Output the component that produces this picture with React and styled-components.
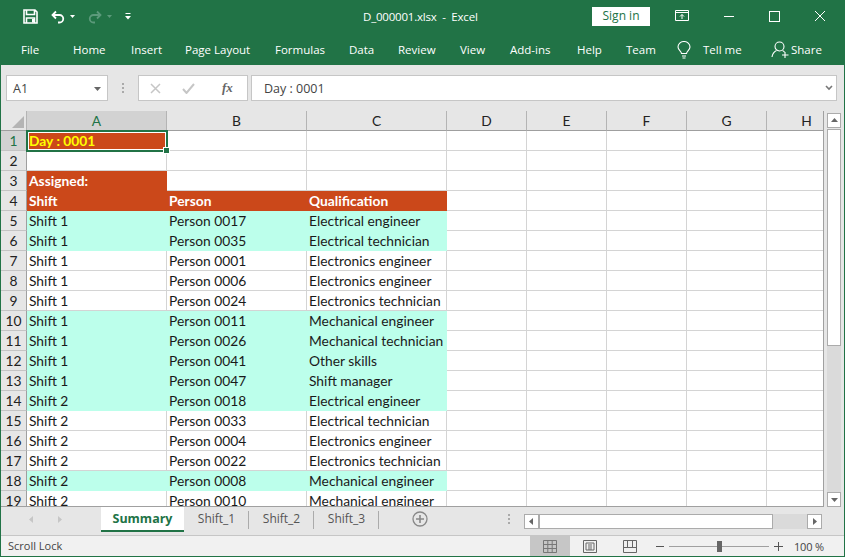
import React from "react"
import styled, { createGlobalStyle } from "styled-components"

const GREEN = "#217346"
const ORANGE = "#cb481a"
const TEAL = "#bcffeb"

const Global = createGlobalStyle`
  html, body {
    margin: 0;
    padding: 0;
    background: #e6e6e6;
  }
  * {
    box-sizing: border-box;
  }
`

const Window = styled.div`
  width: 845px;
  height: 557px;
  display: flex;
  flex-direction: column;
  border: 1px solid ${GREEN};
  border-top: 0;
  overflow: hidden;
  font-family: "Open Sans", "Noto Sans", sans-serif;
  background: #e6e6e6;
`

const TitleBar = styled.div`
  height: 32px;
  flex: none;
  display: flex;
  align-items: center;
  background: ${GREEN};
  color: #fff;
  font-size: 11.5px;
`

const Qat = styled.div`
  width: 362px;
  flex: none;
  display: flex;
  align-items: center;
  padding: 1px 0 0 22px;
`

const QatIcon = styled.svg`
  display: block;
  flex: none;
  margin-right: ${props => props.$gap || 0}px;
`

const Title = styled.div`
  width: 229px;
  flex: none;
  white-space: pre;
  letter-spacing: -0.2px;
`

const SignIn = styled.div`
  width: 58px;
  height: 19px;
  margin-right: 25px;
  flex: none;
  background: #fff;
  color: ${GREEN};
  text-align: center;
  line-height: 18px;
  font-size: 12px;
`

const WinButton = styled.svg`
  display: block;
  flex: none;
  margin-right: ${props => props.$gap || 0}px;
`

const Ribbon = styled.div`
  height: 33px;
  flex: none;
  display: flex;
  align-items: center;
  padding: 2px 0 0 20px;
  background: ${GREEN};
  color: #fff;
  font-size: 11.5px;
`

const RibbonTab = styled.div`
  width: ${props => props.$w}px;
  flex: none;
  display: flex;
  align-items: center;
  white-space: nowrap;
`

const Share = styled.div`
  display: flex;
  align-items: center;
  gap: 1px;
`

const FormulaBar = styled.div`
  height: 46px;
  flex: none;
  display: flex;
  align-items: flex-start;
  padding: 10px 7px 0 5px;
  background: #e6e6e6;
  color: #444;
  font-size: 12.5px;
`

const Box = styled.div`
  height: 26px;
  background: #fff;
  border: 1px solid #c6c6c6;
  display: flex;
  align-items: center;
`

const NameBox = styled(Box)`
  width: 102px;
  flex: none;
  padding: 0 6px;
  justify-content: space-between;
`

const Dots = styled.div`
  width: 30px;
  flex: none;
  height: 26px;
  display: flex;
  align-items: center;
  justify-content: center;
`

const FxBox = styled(Box)`
  width: 110px;
  flex: none;
  margin-right: 3px;
  position: relative;
  padding-left: 11px;
  gap: 21px;
`

const FxLabel = styled.span`
  font-family: "Liberation Serif", serif;
  font-style: italic;
  font-weight: 700;
  font-size: 13px;
  color: #666;
  margin-left: 6px;
`

const FormulaInput = styled(Box)`
  flex: 1;
  padding: 0 3px 0 12px;
  justify-content: space-between;
`

const SheetArea = styled.div`
  height: 396px;
  flex: none;
  display: flex;
`

const Sheet = styled.div`
  width: 823px;
  flex: none;
  overflow: hidden;
  border-right: 1px solid #a0a0a0;
  border-bottom: 1px solid #a0a0a0;
`

const Grid = styled.div`
  width: 846px;
  display: grid;
  grid-template-columns: 26px repeat(3, 140px) repeat(5, 80px);
  grid-auto-rows: 20px;
  font-family: Lato, "Open Sans", sans-serif;
`

const ColHead = styled.div`
  display: flex;
  align-items: center;
  justify-content: center;
  font-size: 13.8px;
  background: ${props => (props.$active ? "#d2d2d2" : "#e6e6e6")};
  color: ${props => (props.$active ? GREEN : "#222")};
  border-right: 1px solid #b4b4b4;
  border-bottom: 1px solid #9f9f9f;
`

const Corner = styled(ColHead)`
  justify-content: flex-end;
  align-items: flex-end;
  padding: 0 2px 2px 0;
  border-right: 1px solid #b4b4b4;
`

const RowHead = styled.div`
  display: flex;
  align-items: center;
  justify-content: center;
  font-size: 13.8px;
  background: ${props => (props.$active ? "#d2d2d2" : "#e6e6e6")};
  color: ${props => (props.$active ? GREEN : "#222")};
  border-right: 1px solid #9f9f9f;
  border-bottom: 1px solid #c4c4c4;
`

const cellBg = props => (props.$fill === "orange" ? ORANGE : props.$fill === "teal" ? TEAL : "#fff")

const Cell = styled.div`
  position: relative;
  z-index: ${props => (props.$selected ? 1 : "auto")};
  padding-left: 2px;
  font-size: 13.8px;
  line-height: 20px;
  white-space: nowrap;
  background: ${cellBg};
  color: ${props => (props.$fill === "orange" ? "#fff" : "#1a1a1a")};
  font-weight: ${props => (props.$fill === "orange" ? 700 : 400)};
  border-right: 1px solid ${props => (props.$fill ? cellBg(props) : "#d4d4d4")};
  border-bottom: 1px solid ${props => (props.$fill ? cellBg(props) : "#d4d4d4")};
`

const DayText = styled.span`
  color: #ffff00;
`

const Selection = styled.div`
  position: absolute;
  inset: -1px -2px -2px -1px;
  border: 2px solid ${GREEN};
  box-shadow: inset 0 0 0 1px #fff;
  pointer-events: none;
`

const Handle = styled.div`
  position: absolute;
  right: -4px;
  bottom: -4px;
  width: 7px;
  height: 7px;
  background: ${GREEN};
  border: 1px solid #fff;
`

const VScroll = styled.div`
  flex: 1;
  padding: 2px 3px 0 3px;
  display: flex;
  flex-direction: column;
  background: #e6e6e6;
`

const ScrollBtn = styled.div`
  flex: none;
  width: ${props => (props.$horizontal ? "15px" : "100%")};
  height: ${props => (props.$horizontal ? "100%" : "15px")};
  background: #fff;
  border: 1px solid #ababab;
  display: flex;
  align-items: center;
  justify-content: center;
`

const VThumb = styled.div`
  height: 217px;
  flex: none;
  background: #fff;
  border: 1px solid #ababab;
  margin-top: 1px;
`

const VTrack = styled.div`
  flex: 1;
  background: #dadada;
`

const TabBar = styled.div`
  height: 28px;
  flex: none;
  display: flex;
  align-items: flex-start;
  background: #e6e6e6;
  color: #555;
  font-size: 12px;
`

const TabNav = styled.div`
  width: 100px;
  height: 24px;
  flex: none;
  display: flex;
  align-items: center;
  padding-left: 27px;
  gap: 21px;
`

const Tab = styled.div`
  height: 25px;
  flex: none;
  width: ${props => props.$w}px;
  display: flex;
  align-items: center;
  justify-content: center;
  padding-bottom: 2px;
`

const ShiftTab = styled(Tab)`
  position: relative;
  &::after {
    content: "";
    position: absolute;
    right: 0;
    top: 4px;
    bottom: 3px;
    width: 1px;
    background: #ababab;
  }
`

const ActiveTab = styled(Tab)`
  background: #fff;
  color: ${GREEN};
  font-weight: 700;
  font-size: 12.5px;
  border-bottom: 2px solid ${GREEN};
  padding-bottom: 0;
`

const AddSheet = styled.div`
  width: 145px;
  height: 24px;
  flex: none;
  display: flex;
  align-items: center;
  padding-left: 33px;
  gap: 80px;
`

const HScroll = styled.div`
  width: 298px;
  height: 15px;
  margin-top: 7px;
  flex: none;
  display: flex;
`

const HThumb = styled.div`
  width: 234px;
  flex: none;
  background: #fff;
  border: 1px solid #ababab;
`

const HTrack = styled.div`
  flex: 1;
  background: #dadada;
`

const StatusBar = styled.div`
  flex: 1;
  display: flex;
  align-items: stretch;
  background: #f1f1f1;
  border-top: 1px solid #c6c6c6;
  color: #444;
  font-size: 11px;
`

const StatusText = styled.div`
  width: 529px;
  flex: none;
  padding-left: 7px;
  line-height: 20px;
`

const ViewBtn = styled.div`
  width: 40px;
  flex: none;
  display: flex;
  align-items: center;
  justify-content: center;
  background: ${props => (props.$active ? "#c6c6c6" : "transparent")};
`

const Zoom = styled.div`
  display: flex;
  align-items: center;
  padding-left: 6px;
`

const Slider = styled.div`
  position: relative;
  width: 100px;
  height: 1px;
  margin: 0 5px 0 5px;
  background: #a0a0a0;
`

const SliderThumb = styled.div`
  position: absolute;
  left: 48px;
  top: -5px;
  width: 5px;
  height: 11px;
  background: #666;
`

const ZoomValue = styled.div`
  margin-left: 11px;
  font-size: 11px;
  letter-spacing: -0.2px;
`

const ribbonTabs = [
  ["File", 52],
  ["Home", 58],
  ["Insert", 54],
  ["Page Layout", 90],
  ["Formulas", 74],
  ["Data", 49],
  ["Review", 62],
  ["View", 50],
  ["Add-ins", 67],
  ["Help", 49],
  ["Team", 51]
]

const cols = ["A", "B", "C", "D", "E", "F", "G", "H"]

const rows = [
  ["Shift 1", "Person 0017", "Electrical engineer", "teal"],
  ["Shift 1", "Person 0035", "Electrical technician", "teal"],
  ["Shift 1", "Person 0001", "Electronics engineer"],
  ["Shift 1", "Person 0006", "Electronics engineer"],
  ["Shift 1", "Person 0024", "Electronics technician"],
  ["Shift 1", "Person 0011", "Mechanical engineer", "teal"],
  ["Shift 1", "Person 0026", "Mechanical technician", "teal"],
  ["Shift 1", "Person 0041", "Other skills", "teal"],
  ["Shift 1", "Person 0047", "Shift manager", "teal"],
  ["Shift 2", "Person 0018", "Electrical engineer", "teal"],
  ["Shift 2", "Person 0033", "Electrical technician"],
  ["Shift 2", "Person 0004", "Electronics engineer"],
  ["Shift 2", "Person 0022", "Electronics technician"],
  ["Shift 2", "Person 0008", "Mechanical engineer", "teal"],
  ["Shift 2", "Person 0010", "Mechanical engineer"]
]

const Blanks = ({ count }) =>
  Array.from({ length: count }, (_, i) => <Cell key={i} />)

const Arrow = ({ dir, color = "#666", size = 7 }) => {
  const pts = {
    up: "0,5 7,5 3.5,1",
    down: "0,2 7,2 3.5,6",
    left: "5,0 5,7 1,3.5",
    right: "2,0 2,7 6,3.5"
  }
  return (
    <svg width={size} height={size} viewBox="0 0 7 7">
      <polygon points={pts[dir]} fill={color} />
    </svg>
  )
}

const SaveIcon = () => (
  <QatIcon width="15" height="15" viewBox="0 0 15 15" $gap={13}>
    <path d="M1 1h11l2 2v11H1z M3.5 1.5v4h8v-4 M3.5 14v-5h8v5" fill="none" stroke="#fff" strokeWidth="1.6" />
    <rect x="9" y="10" width="2" height="3.5" fill="#fff" />
  </QatIcon>
)

const UndoIcon = ({ color, flip, gap }) => (
  <QatIcon
    width="15"
    height="14"
    viewBox="0 0 15 14"
    $gap={gap}
    style={flip ? { transform: "scaleX(-1)" } : undefined}
  >
    <path d="M5 1.5L1.5 5 5 8.5M2 5h6.5a3.6 3.6 0 0 1 0 7.5H7" fill="none" stroke={color} strokeWidth="1.8" />
  </QatIcon>
)

const SmallCaret = ({ color, gap }) => (
  <QatIcon width="5" height="3" viewBox="0 0 5 3" $gap={gap}>
    <polygon points="0,0 5,0 2.5,3" fill={color} />
  </QatIcon>
)

const Customize = () => (
  <QatIcon width="6" height="7" viewBox="0 0 6 7">
    <rect x="0.5" y="0" width="5" height="1" fill="#fff" />
    <polygon points="0,3 6,3 3,6.5" fill="#fff" />
  </QatIcon>
)

const RibbonDisplay = () => (
  <WinButton width="14" height="12" viewBox="0 0 14 12" $gap={34}>
    <path d="M.5 .5h13v10h-13z M.5 2.5h13" fill="none" stroke="#fff" />
    <path d="M7 9V4.5M5 6.5l2-2 2 2" fill="none" stroke="#fff" />
  </WinButton>
)

const Bulb = () => (
  <svg width="14" height="18" viewBox="0 0 14 18">
    <path
      d="M4.5 12.5c0-2-3.5-3.6-3.500-6.500a6 5.500 0 0 1 12 0c0 2.900-3.500 4.500-3.500 6.500z M5 15h4 M5.500 17h3"
      fill="none"
      stroke="#fff"
      strokeWidth="1.1"
    />
  </svg>
)

const Person = () => (
  <svg width="19" height="17" viewBox="0 0 19 17">
    <circle cx="8.500" cy="5.500" r="4.500" fill="none" stroke="#fff" strokeWidth="1.100" />
    <path d="M1 16c.5-3.500 2.500-5.500 4.500-6.500M11.500 9.500c.800.400 1.500 1 2 1.500M14 11v6M11 14h6.500" fill="none" stroke="#fff" strokeWidth="1.100" />
  </svg>
)

const GripDots = () => (
  <svg width="2" height="10" viewBox="0 0 2 10">
    <rect y="0" width="2" height="2" fill="#aaa" />
    <rect y="4" width="2" height="2" fill="#aaa" />
    <rect y="8" width="2" height="2" fill="#aaa" />
  </svg>
)

export default function App() {
  return (
    <>
      <Global />
      <Window>
        <TitleBar>
          <Qat>
            <SaveIcon />
            <UndoIcon color="#fff" gap={4} />
            <SmallCaret color="#fff" gap={12} />
            <UndoIcon color="#5c9a7b" flip gap={5} />
            <SmallCaret color="#5c9a7b" gap={13} />
            <Customize />
          </Qat>
          <Title>D_000001.xlsx  -  Excel</Title>
          <SignIn>Sign in</SignIn>
          <RibbonDisplay />
          <WinButton width="12" height="12" viewBox="0 0 12 12" $gap={34}>
            <path d="M1 6.500h10" stroke="#fff" />
          </WinButton>
          <WinButton width="11" height="11" viewBox="0 0 11 11" $gap={34}>
            <rect x=".5" y=".5" width="10" height="10" fill="none" stroke="#fff" />
          </WinButton>
          <WinButton width="12" height="12" viewBox="0 0 12 12">
            <path d="M1 1l10 10M11 1L1 11" stroke="#fff" />
          </WinButton>
        </TitleBar>

        <Ribbon>
          {ribbonTabs.map(([label, w]) => (
            <RibbonTab key={label} $w={w}>
              {label}
            </RibbonTab>
          ))}
          <RibbonTab $w={26}>
            <Bulb />
          </RibbonTab>
          <RibbonTab $w={68}>Tell me</RibbonTab>
          <Share>
            <Person />
            Share
          </Share>
        </Ribbon>

        <FormulaBar>
          <NameBox>
            A1
            <Arrow dir="down" />
          </NameBox>
          <Dots>
            <GripDots />
          </Dots>
          <FxBox>
            <svg width="11" height="11" viewBox="0 0 11 11">
              <path d="M1 1l9 9M10 1l-9 9" stroke="#c6c6c6" strokeWidth="1.500" />
            </svg>
            <svg width="13" height="11" viewBox="0 0 13 11">
              <path d="M1 6l3.500 4L12 1" fill="none" stroke="#c6c6c6" strokeWidth="2" />
            </svg>
            <FxLabel>fx</FxLabel>
          </FxBox>
          <FormulaInput>
            Day : 0001
            <svg width="8" height="6" viewBox="0 0 8 6">
              <path d="M1 1l3 3 3-3" fill="none" stroke="#777" strokeWidth="1.600" />
            </svg>
          </FormulaInput>
        </FormulaBar>

        <SheetArea>
          <Sheet>
            <Grid>
              <Corner>
                <svg width="12" height="12" viewBox="0 0 12 12">
                  <polygon points="12,0 12,12 0,12" fill="#b4b4b4" />
                </svg>
              </Corner>
              {cols.map((c, i) => (
                <ColHead key={c} $active={i === 0}>
                  {c}
                </ColHead>
              ))}

              <RowHead $active>1</RowHead>
              <Cell $fill="orange" $selected>
                <DayText>Day : 0001</DayText>
                <Selection />
                <Handle />
              </Cell>
              <Blanks count={7} />

              <RowHead>2</RowHead>
              <Blanks count={8} />

              <RowHead>3</RowHead>
              <Cell $fill="orange">Assigned:</Cell>
              <Blanks count={7} />

              <RowHead>4</RowHead>
              <Cell $fill="orange">Shift</Cell>
              <Cell $fill="orange">Person</Cell>
              <Cell $fill="orange">Qualification</Cell>
              <Blanks count={5} />

              {rows.map(([shift, person, skill, fill], i) => (
                <React.Fragment key={i}>
                  <RowHead>{i + 5}</RowHead>
                  <Cell $fill={fill}>{shift}</Cell>
                  <Cell $fill={fill}>{person}</Cell>
                  <Cell $fill={fill}>{skill}</Cell>
                  <Blanks count={5} />
                </React.Fragment>
              ))}
            </Grid>
          </Sheet>
          <VScroll>
            <ScrollBtn>
              <Arrow dir="up" />
            </ScrollBtn>
            <VThumb />
            <VTrack />
            <ScrollBtn>
              <Arrow dir="down" />
            </ScrollBtn>
          </VScroll>
        </SheetArea>

        <TabBar>
          <TabNav>
            <Arrow dir="left" color="#c6c6c6" />
            <Arrow dir="right" color="#c6c6c6" />
          </TabNav>
          <ActiveTab $w={83}>Summary</ActiveTab>
          <ShiftTab $w={65}>Shift_1</ShiftTab>
          <ShiftTab $w={65}>Shift_2</ShiftTab>
          <ShiftTab $w={65}>Shift_3</ShiftTab>
          <AddSheet>
            <svg width="16" height="16" viewBox="0 0 16 16">
              <circle cx="8" cy="8" r="7" fill="none" stroke="#888" strokeWidth="1.300" />
              <path d="M8 4v8M4 8h8" stroke="#888" strokeWidth="1.600" />
            </svg>
            <GripDots />
          </AddSheet>
          <HScroll>
            <ScrollBtn $horizontal>
              <Arrow dir="left" />
            </ScrollBtn>
            <HThumb />
            <HTrack />
            <ScrollBtn $horizontal>
              <Arrow dir="right" />
            </ScrollBtn>
          </HScroll>
        </TabBar>

        <StatusBar>
          <StatusText>Scroll Lock</StatusText>
          <ViewBtn $active>
            <svg width="14" height="13" viewBox="0 0 14 13">
              <path d="M.5 .5h13v12H.5z M.5 4.500h13 M.5 8.500h13 M4.800 .5v12 M9.200 .5v12" fill="none" stroke="#777" />
            </svg>
          </ViewBtn>
          <ViewBtn>
            <svg width="14" height="13" viewBox="0 0 14 13">
              <path d="M.5 .5h13v12H.5z" fill="none" stroke="#666" />
              <path d="M3 3h8v7H3z M5 5h4 M5 7h4 M5 9h4" fill="none" stroke="#666" />
            </svg>
          </ViewBtn>
          <ViewBtn>
            <svg width="14" height="13" viewBox="0 0 14 13">
              <path d="M.5 .5h13v12H.5z M.5 7.500h13 M4.500 .5v7 M9.500 .5v7" fill="none" stroke="#666" />
            </svg>
          </ViewBtn>
          <Zoom>
            <svg width="8" height="8" viewBox="0 0 8 8">
              <path d="M0 4.500h8" stroke="#555" />
            </svg>
            <Slider>
              <SliderThumb />
            </Slider>
            <svg width="9" height="9" viewBox="0 0 9 9">
              <path d="M0 4.500h9M4.500 0v9" stroke="#555" />
            </svg>
            <ZoomValue>100 %</ZoomValue>
          </Zoom>
        </StatusBar>
      </Window>
    </>
  )
}
